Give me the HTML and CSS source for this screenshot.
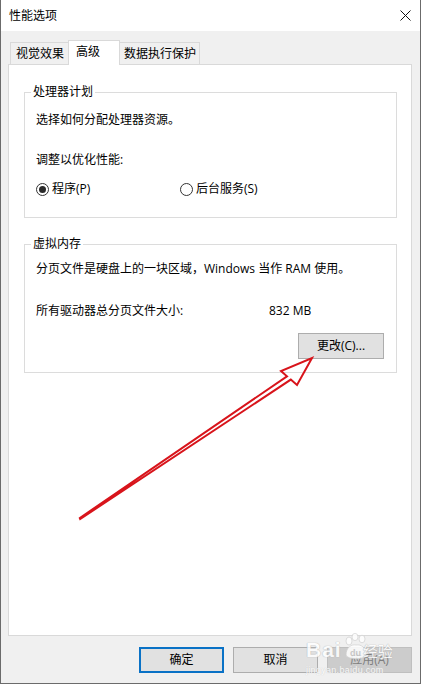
FILE: index.html
```html
<!DOCTYPE html>
<html lang="zh-CN">
<head>
    <meta charset="UTF-8">
    <meta name="viewport" content="width=device-width, initial-scale=1.0">
    <title>性能选项</title>
    <link rel="stylesheet" href="styles.css">
</head>
<body>
    <div class="window">
        <div class="titlebar">
            <span class="title">性能选项</span>
            <svg class="close" width="11" height="11" viewBox="0 0 11 11">
                <path d="M0.5 0.5L10.5 10.5M10.5 0.5L0.5 10.5" stroke="#111" stroke-width="1" fill="none"/>
            </svg>
        </div>

        <div class="main">
            <div class="tabs">
                <div class="tab tab-first">视觉效果</div>
                <div class="tab active">高级</div>
                <div class="tab tab-last">数据执行保护</div>
            </div>

            <div class="panel">
                <!-- 处理器计划 -->
                <fieldset class="group group-cpu">
                    <legend>处理器计划</legend>
                    <div class="group-inner">
                        <p class="line">选择如何分配处理器资源。</p>
                        <p class="line gap-big">调整以优化性能:</p>
                        <div class="radios">
                            <label class="radio checked"><span class="dot"></span>程序(P)</label>
                            <label class="radio"><span class="dot"></span>后台服务(S)</label>
                        </div>
                    </div>
                </fieldset>

                <!-- 虚拟内存 -->
                <fieldset class="group group-mem">
                    <legend>虚拟内存</legend>
                    <div class="group-inner">
                        <p class="line">分页文件是硬盘上的一块区域，Windows 当作 RAM 使用。</p>
                        <div class="line size-row">
                            <span>所有驱动器总分页文件大小:</span>
                            <span>832 MB</span>
                        </div>
                        <div class="change-row">
                            <button class="btn btn-change">更改(C)...</button>
                        </div>
                    </div>
                </fieldset>
            </div>

            <div class="actions">
                <button class="btn default">确定</button>
                <button class="btn">取消</button>
                <button class="btn disabled">应用(A)</button>
            </div>
        </div>

        <!-- 红色箭头标注 -->
        <svg class="arrow" width="421" height="685" viewBox="0 0 421 685">
            <polygon points="79.8,518 287,376.3 281,371 312,358 297,385 290.8,379.6 80.2,519"
                     fill="none" stroke="#d8141b" stroke-width="2" stroke-linejoin="miter"/>
        </svg>

        <!-- 百度经验水印 -->
        <div class="watermark">
            <div class="wm-top">
                <span class="wm-bai">Bai</span>
                <svg class="wm-paw" width="26" height="28" viewBox="0 0 26 28">
                    <ellipse cx="6" cy="8" rx="3" ry="4" fill="#fff" stroke="#cfcfcf" stroke-width="0.8"/>
                    <ellipse cx="12" cy="4" rx="3" ry="3.6" fill="#fff" stroke="#cfcfcf" stroke-width="0.8"/>
                    <ellipse cx="19" cy="6" rx="3" ry="3.8" fill="#fff" stroke="#cfcfcf" stroke-width="0.8"/>
                    <path d="M3 22 C3 14 9 11 13 12 C18 11 24 15 23 22 C22 27 4 27 3 22 Z" fill="#fff" stroke="#cfcfcf" stroke-width="0.8"/>
                    <text x="7" y="23" class="wm-du">du</text>
                </svg>
                <span class="wm-jy">经验</span>
            </div>
            <div class="wm-url">jingyan.baidu.com</div>
        </div>
    </div>
</body>
</html>
```

FILE: styles.css
```css
* {
    margin: 0;
    padding: 0;
    box-sizing: border-box;
}

body {
    margin: 0;
    background: #fff;
    font-family: "Open Sans", "Noto Sans CJK SC", sans-serif;
    font-size: 12px;
    color: #000;
}

.window {
    position: relative;
    width: 421px;
    height: 684px;
    border: 1px solid #6b6b6b;
    border-top: none;
    background: #f0f0f0;
    display: flex;
    flex-direction: column;
    overflow: hidden;
}

/* 标题栏 */
.titlebar {
    height: 31px;
    background: #fff;
    display: flex;
    align-items: center;
    justify-content: space-between;
    padding: 0 9px 0 8px;
    flex-shrink: 0;
}

.title {
    line-height: 16px;
}

.close {
    display: block;
}

.main {
    flex: 1;
    display: flex;
    flex-direction: column;
    padding: 9px 8px 0 7px;
}

/* 选项卡 */
.tabs {
    height: 24px;
    display: flex;
    align-items: flex-end;
    padding-left: 2px;
}

.tab {
    height: 22px;
    line-height: 21px;
    border: 1px solid #d9d9d9;
    border-bottom: none;
    background: #f0f0f0;
    white-space: nowrap;
}

.tab-first {
    padding: 0 4px 0 5px;
}

.tab.active {
    position: relative;
    z-index: 1;
    height: 25px;
    margin: 0 0 -1px -1px;
    padding: 0 19px 0 7px;
    background: #fff;
}

.tab-last {
    margin-left: -1px;
    padding: 0 3px 0 4px;
}

.panel {
    flex: 1;
    background: #fff;
    border: 1px solid #d9d9d9;
    padding: 19px 14px 0 15px;
}

/* 分组框 */
.group {
    border: 1px solid #dcdcdc;
    padding: 0;
    margin: 0;
    min-width: 0;
}

.group legend {
    margin-left: 6px;
    padding: 0 2px;
    line-height: 16px;
}

.group-mem {
    margin-top: 18px;
}

.line {
    line-height: 16px;
    white-space: nowrap;
}

.group-cpu .group-inner {
    padding: 12px 11px 20px 11px;
}

.gap-big {
    margin-top: 24px;
}

.radios {
    margin-top: 13px;
    display: grid;
    grid-template-columns: 144px auto;
    line-height: 16px;
}

.radio {
    display: flex;
    align-items: center;
    gap: 3px;
}

.dot {
    width: 13px;
    height: 13px;
    border: 1px solid #333;
    border-radius: 50%;
    display: flex;
    align-items: center;
    justify-content: center;
    flex-shrink: 0;
}

.radio.checked .dot::after {
    content: "";
    width: 7px;
    height: 7px;
    border-radius: 50%;
    background: #2a2a2a;
}

.group-mem .group-inner {
    padding: 9px 12px 13px 11px;
}

.size-row {
    margin-top: 26px;
    display: grid;
    grid-template-columns: 233px auto;
}

.change-row {
    margin-top: 14px;
    display: flex;
    justify-content: flex-end;
}

/* 按钮 */
.btn {
    font-family: inherit;
    font-size: 12px;
    color: #000;
    background: #e1e1e1;
    border: 1px solid #adadad;
    height: 26px;
    width: 85px;
    line-height: 16px;
    cursor: pointer;
}

.btn-change {
    width: 86px;
}

.btn.default {
    border: 2px solid #0a72c6;
}

.btn.disabled {
    background: #cccccc;
    border-color: #bfbfbf;
    color: #7e7e7e;
}

.actions {
    height: 26px;
    margin: 11px 0 10px;
    display: flex;
    justify-content: flex-end;
    gap: 9px;
}

.arrow {
    position: absolute;
    left: -1px;
    top: 0;
    pointer-events: none;
}

/* 水印 */
.watermark {
    position: absolute;
    left: 305px;
    top: 631px;
    width: 90px;
    pointer-events: none;
    color: #fff;
    opacity: 0.85;
}

.wm-top {
    display: flex;
    align-items: flex-end;
    height: 30px;
}

.wm-bai {
    font-family: "Liberation Sans", sans-serif;
    font-size: 21px;
    font-weight: bold;
    line-height: 22px;
    letter-spacing: 1px;
    text-shadow: 0 0 1px #b5b5b5, 0 0 1px #b5b5b5;
}

.wm-paw {
    display: block;
    margin: 0 -6px 0 1px;
}

.wm-du {
    font-family: "Liberation Sans", sans-serif;
    font-size: 9px;
    font-weight: bold;
    fill: #c8c8c8;
}

.wm-jy {
    font-family: "Noto Sans CJK SC", sans-serif;
    font-size: 15px;
    line-height: 20px;
    text-shadow: 0 0 1px #b0b0b0, 0 0 1px #b0b0b0;
}

.wm-url {
    font-family: "Liberation Sans", sans-serif;
    font-size: 9px;
    line-height: 10px;
    margin-top: 4px;
    letter-spacing: 0.3px;
    text-shadow: 0 0 1px #bdbdbd;
}
```
